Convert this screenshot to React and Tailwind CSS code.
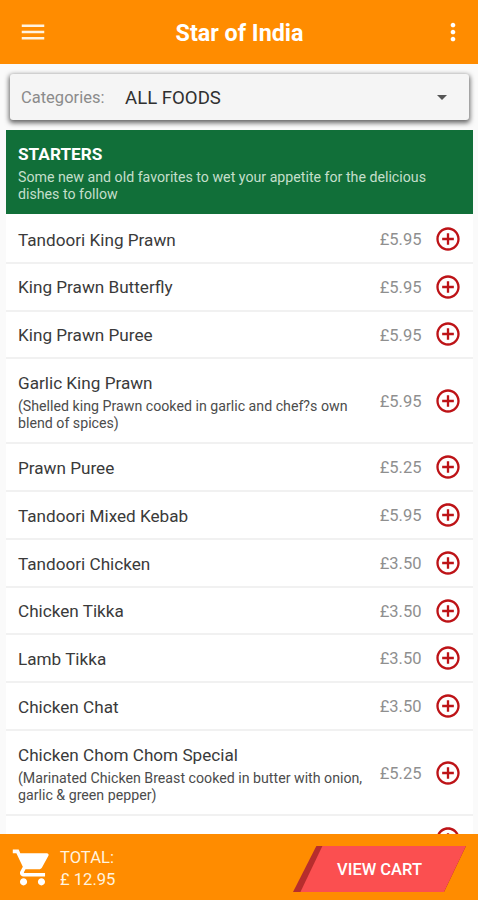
import { MdAddCircleOutline, MdArrowDropDown, MdMenu, MdMoreVert, MdShoppingCart } from 'react-icons/md';

const starters = [
  { name: 'Tandoori King Prawn', price: '5.95' },
  { name: 'King Prawn Butterfly', price: '5.95' },
  { name: 'King Prawn Puree', price: '5.95' },
  {
    name: 'Garlic King Prawn',
    price: '5.95',
    lines: ['(Shelled king Prawn cooked in garlic and chef?s own', 'blend of spices)'],
  },
  { name: 'Prawn Puree', price: '5.25' },
  { name: 'Tandoori Mixed Kebab', price: '5.95' },
  { name: 'Tandoori Chicken', price: '3.50' },
  { name: 'Chicken Tikka', price: '3.50' },
  { name: 'Lamb Tikka', price: '3.50' },
  { name: 'Chicken Chat', price: '3.50' },
  {
    name: 'Chicken Chom Chom Special',
    price: '5.25',
    lines: ['(Marinated Chicken Breast cooked in butter with onion,', 'garlic & green pepper)'],
  },
  { name: '', price: '' },
];

function Header() {
  return (
    <header className="flex h-16 shrink-0 items-center justify-between bg-[#ff8c00] pr-[11px] pl-[18px] text-white">
      <MdMenu size={30} className="text-[#fff3e0]" />
      <h1 className="pt-0.5 pr-[8px] text-[23.3px] leading-7 font-bold">Star of India</h1>
      <MdMoreVert size={28} />
    </header>
  );
}

function CategorySelect() {
  return (
    <div className="mr-[9px] ml-[10px] mt-[10px] flex h-[46px] shrink-0 items-center rounded-[3px] bg-[#f5f5f5] pr-[15px] pl-[11px] shadow-[0_2px_5px_1px_rgba(0,0,0,0.6)]">
      <span className="w-[104px] pt-[3px] text-[16.5px] text-[#8b8b8b]">Categories:</span>
      <span className="flex-1 pt-[3px] text-[18.6px] text-[#303030]">ALL FOODS</span>
      <MdArrowDropDown size={24} className="text-[#555]" />
    </div>
  );
}

function FoodRow({ item }) {
  return (
    <li
      className={`flex shrink-0 items-center border-b-2 border-[#f1f1f1] bg-white pr-[11.5px] pl-3 ${
        item.lines ? 'h-[85.2px]' : 'h-[47.75px]'
      }`}
    >
      <div className="flex-1 pt-[1.5px] whitespace-nowrap">
        <p className="text-[17.15px] leading-6 text-[#3a3a3a]">{item.name}</p>
        {item.lines && (
          <div className="pt-[3px] text-[14.2px] leading-[17px] text-[#4c4c4c]">
            {item.lines.map((line) => (
              <p key={line}>{line}</p>
            ))}
          </div>
        )}
      </div>
      <span className="mr-3 pt-[3px] text-[16.5px] text-[#8f8f8f]">{item.price && `£${item.price}`}</span>
      <MdAddCircleOutline size={28} className="text-[#bd1317]" />
    </li>
  );
}

function CartBar() {
  return (
    <footer className="flex h-[66px] shrink-0 items-center bg-[#ff8c00] pr-3 pl-[11px] text-white">
      <MdShoppingCart size={43} />
      <div className="ml-[6px] flex-1 pt-1 text-[16.6px] leading-[22.5px] text-[#fff3df]">
        <p>TOTAL:</p>
        <p>£ 12.95</p>
      </div>
      <button className="mt-1 h-[46px] w-[173px] bg-[#b72d2d] [clip-path:polygon(13.5%_0,100%_0,87.3%_100%,0_100%)]">
        <span className="flex h-full items-center justify-center bg-[#fb4f50] pt-0.5 text-[16.5px] font-medium [clip-path:polygon(17%_0,100%_0,87.3%_100%,4.3%_100%)]">
          VIEW CART
        </span>
      </button>
    </footer>
  );
}

export default function App() {
  return (
    <div className="flex h-[900px] w-[478px] flex-col overflow-hidden bg-[#fafafa] font-[Roboto,sans-serif]">
      <Header />
      <CategorySelect />
      <main className="mr-[5px] ml-1.5 mt-2.5 min-h-0 flex-1 overflow-hidden">
        <div className="h-[84px] bg-[#116f39] px-3 pt-3 text-white">
          <h2 className="text-[17.2px] leading-6 font-bold">STARTERS</h2>
          <p className="pt-[3px] text-[14.2px] leading-[17px] text-[#c4dfcb]">
            Some new and old favorites to wet your appetite for the delicious
            <br />
            dishes to follow
          </p>
        </div>
        <ul className="flex flex-col bg-white pt-[2px]">
          {starters.map((item, i) => (
            <FoodRow key={i} item={item} />
          ))}
        </ul>
      </main>
      <CartBar />
    </div>
  );
}
